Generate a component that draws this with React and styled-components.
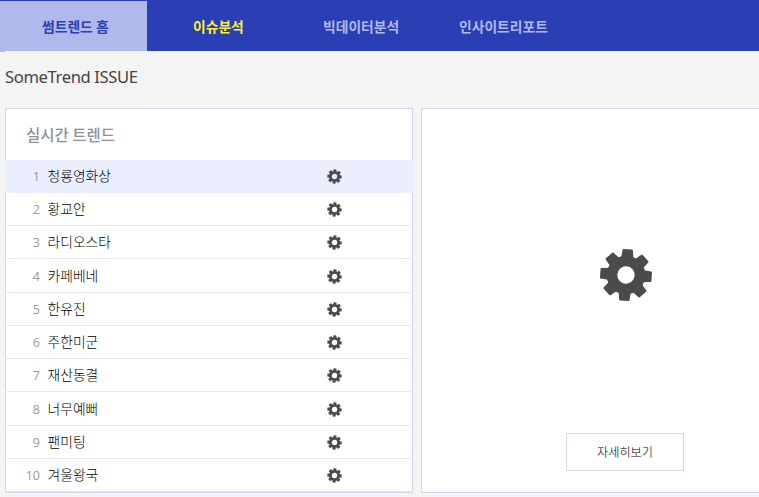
import React from 'react';
import styled, { createGlobalStyle } from 'styled-components';

const GlobalStyle = createGlobalStyle`
  * { box-sizing: border-box; }
  body {
    margin: 0;
    background: #f4f4f4;
    font-family: "Noto Sans CJK KR", sans-serif;
    overflow: hidden;
  }
`;

const Page = styled.div`
  height: 497px;
  overflow: hidden;
`;

const Nav = styled.nav`
  display: flex;
  height: 51px;
  background: #2a3fb4;
`;

const Tab = styled.a`
  flex: none;
  width: ${(p) => p.$width}px;
  margin-top: 1px;
  height: 50px;
  padding-left: ${(p) => p.$inset}px;
  line-height: 50px;
  font-size: 13.8px;
  font-weight: 700;
  white-space: nowrap;
  color: ${(p) => p.$color};
  background: ${(p) => p.$background || 'transparent'};
`;

const Edge = styled.div`
  width: 5px;
  height: 1px;
  background: #b0b9ec;
`;

const Title = styled.h1`
  margin: 0;
  height: 56px;
  padding-left: 5px;
  font: 400 16.6px/50px "Noto Sans", sans-serif;
  letter-spacing: -0.38px;
  color: #444;
`;

const Panels = styled.main`
  display: flex;
  gap: 8px;
  padding-left: 5px;
`;

const Panel = styled.section`
  flex: none;
  width: 408px;
  height: 385px;
  border: 1px solid #d5d5e9;
  background: #fff;
`;

const PanelTitle = styled.h2`
  margin: 0;
  height: 51px;
  padding-left: 20px;
  font-size: 15.5px;
  line-height: 51px;
  font-weight: 500;
  color: #8f8f9b;
`;

const List = styled.ol`
  margin: 0 -1px;
  padding: 0;
  list-style: none;
`;

const Row = styled.li`
  display: flex;
  align-items: center;
  height: ${(p) => p.$height}px;
  padding: 0 71.5px 0 15px;
  border-bottom: 1px solid ${(p) => (p.$active ? '#ebeeff' : '#e6e6f4')};
  background: ${(p) => (p.$active ? '#ebeeff' : 'transparent')};
`;

const Rank = styled.span`
  width: 20px;
  margin-right: 7.5px;
  padding-top: 2px;
  text-align: right;
  font: 400 12.5px/20px "Open Sans", sans-serif;
  color: #999;
`;

const Keyword = styled.span`
  flex: 1;
  padding-bottom: ${(p) => (p.$active ? 3 : 2)}px;
  font-size: 13.8px;
  line-height: 20px;
  font-weight: 300;
  color: #000;
`;

const Detail = styled.div`
  display: flex;
  flex-direction: column;
  align-items: center;
  padding: 139px 0 0;
`;

const MoreButton = styled.button`
  width: 118px;
  height: 38px;
  margin-top: 131px;
  padding: 0;
  border: 1px solid #d5d5e9;
  background: #fff;
  font: 300 12.2px/34px "Noto Sans CJK KR", sans-serif;
  color: #000;
`;

const GearSvg = styled.svg`
  flex: none;
  display: block;
  margin-top: ${(p) => p.$drop || 0}px;
  margin-left: ${(p) => p.$shift || 0}px;
`;

const TEETH = [0, 45, 90, 135, 180, 225, 270, 315];

function Gear({ size, drop, shift, ring = 10.6 }) {
  return (
    <GearSvg width={size} height={size} $drop={drop} $shift={shift} viewBox="-27 -27 54 54">
      <g transform="rotate(4)" fill="#4b4b4b">
        <circle r={19.3 - ring / 2} fill="none" stroke="#4b4b4b" strokeWidth={ring} />
        {TEETH.map((angle) => (
          <path
            key={angle}
            transform={`rotate(${angle})`}
            d="M-6.2-16 L-5.2-25 Q-5-25.8-4.2-25.8 H4.2 Q5-25.8 5.2-25 L6.2-16Z"
          />
        ))}
      </g>
    </GearSvg>
  );
}

const KEYWORDS = [
  ['청룡영화상', 33], ['황교안', 33], ['라디오스타', 33], ['카페베네', 34], ['한유진', 33],
  ['주한미군', 33], ['재산동결', 33], ['너무예뻐', 34], ['팬미팅', 33], ['겨울왕국', 33],
];

export default function App() {
  return (
    <Page>
      <GlobalStyle />
      <Nav>
        <Tab $width={147} $inset={42} $color="#2a3fb4" $background="#b0b9ec">썸트렌드 홈</Tab>
        <Tab $width={142} $inset={46} $color="#ffee32">이슈분석</Tab>
        <Tab $width={144} $inset={34} $color="#b0b9ec">빅데이터분석</Tab>
        <Tab $width={150} $inset={26} $color="#b0b9ec">인사이트리포트</Tab>
      </Nav>
      <Edge />
      <Title>SomeTrend ISSUE</Title>
      <Panels>
        <Panel>
          <PanelTitle>실시간 트렌드</PanelTitle>
          <List>
            {KEYWORDS.map(([word, height], i) => (
              <Row key={word} $height={height} $active={i === 0}>
                <Rank>{i + 1}</Rank>
                <Keyword $active={i === 0}>{word}</Keyword>
                <Gear size={15} drop={1} ring={9.5} />
              </Row>
            ))}
          </List>
        </Panel>
        <Panel>
          <Detail>
            <Gear size={54} shift={2} />
            <MoreButton>자세히보기</MoreButton>
          </Detail>
        </Panel>
      </Panels>
    </Page>
  );
}
